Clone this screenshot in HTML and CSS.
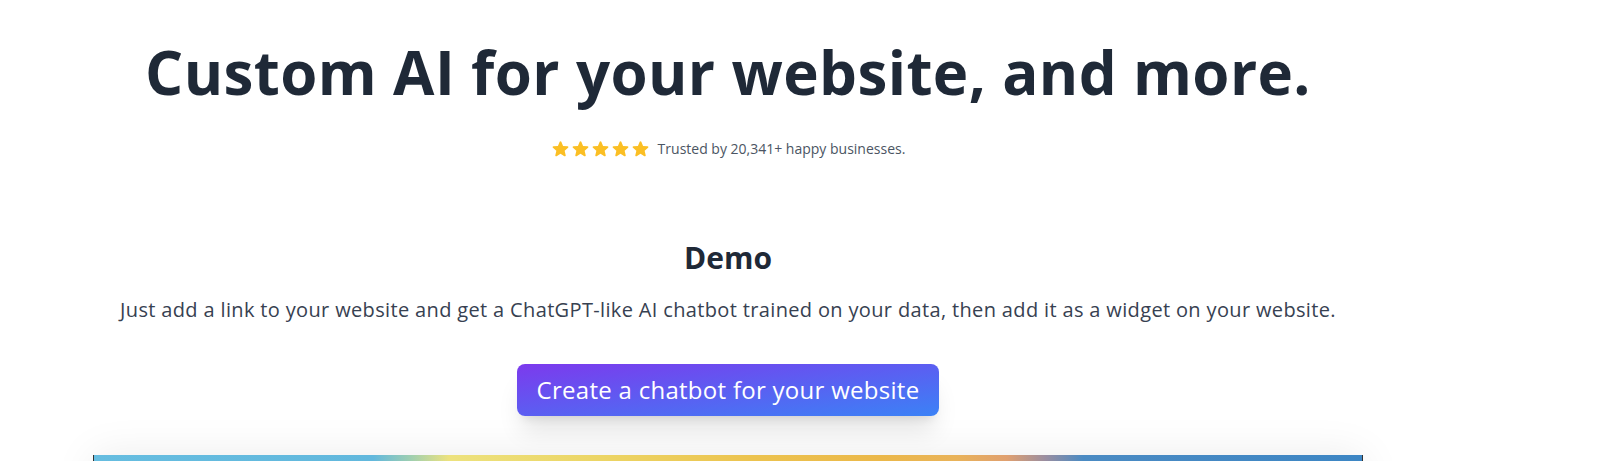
FILE: index.html
```html
<!DOCTYPE html>
<html lang="en">
<head>
    <meta charset="UTF-8">
    <title>Custom AI for your website</title>
    <link rel="stylesheet" href="styles.css">
</head>
<body>
    <main class="page">
        <section class="hero">
            <h1 class="title">Custom AI for your website, and more.</h1>
            <div class="rating">
                <div class="stars">
                    <svg viewBox="0 0 20 20"><path d="M10.87 2.88c-.32-.77-1.42-.77-1.74 0L7.3 7.29l-4.75.38c-.83.07-1.17 1.1-.54 1.65l3.62 3.1-1.1 4.64c-.2.81.69 1.46 1.4 1.02L10 15.59l4.07 2.49c.71.44 1.6-.21 1.4-1.02l-1.1-4.64 3.62-3.1c.63-.55.3-1.58-.54-1.65l-4.75-.38-1.83-4.4z"/></svg>
                    <svg viewBox="0 0 20 20"><path d="M10.87 2.88c-.32-.77-1.42-.77-1.74 0L7.3 7.29l-4.75.38c-.83.07-1.17 1.1-.54 1.65l3.62 3.1-1.1 4.64c-.2.81.69 1.46 1.4 1.02L10 15.59l4.07 2.49c.71.44 1.6-.21 1.4-1.02l-1.1-4.64 3.62-3.1c.63-.55.3-1.58-.54-1.65l-4.75-.38-1.83-4.4z"/></svg>
                    <svg viewBox="0 0 20 20"><path d="M10.87 2.88c-.32-.77-1.42-.77-1.74 0L7.3 7.29l-4.75.38c-.83.07-1.17 1.1-.54 1.65l3.62 3.1-1.1 4.64c-.2.81.69 1.46 1.4 1.02L10 15.59l4.07 2.49c.71.44 1.6-.21 1.4-1.02l-1.1-4.64 3.62-3.1c.63-.55.3-1.58-.54-1.65l-4.75-.38-1.83-4.4z"/></svg>
                    <svg viewBox="0 0 20 20"><path d="M10.87 2.88c-.32-.77-1.42-.77-1.74 0L7.3 7.29l-4.75.38c-.83.07-1.17 1.1-.54 1.65l3.62 3.1-1.1 4.64c-.2.81.69 1.46 1.4 1.02L10 15.59l4.07 2.49c.71.44 1.6-.21 1.4-1.02l-1.1-4.64 3.62-3.1c.63-.55.3-1.58-.54-1.65l-4.75-.38-1.83-4.4z"/></svg>
                    <svg viewBox="0 0 20 20"><path d="M10.87 2.88c-.32-.77-1.42-.77-1.74 0L7.3 7.29l-4.75.38c-.83.07-1.17 1.1-.54 1.65l3.62 3.1-1.1 4.64c-.2.81.69 1.46 1.4 1.02L10 15.59l4.07 2.49c.71.44 1.6-.21 1.4-1.02l-1.1-4.64 3.62-3.1c.63-.55.3-1.58-.54-1.65l-4.75-.38-1.83-4.4z"/></svg>
                </div>
                <span class="rating-text">Trusted by 20,341+ happy businesses.</span>
            </div>
        </section>

        <section class="demo">
            <h2 class="demo-title">Demo</h2>
            <p class="demo-text">Just add a link to your website and get a ChatGPT-like AI chatbot trained on your data, then add it as a widget on your website.</p>
            <a class="cta" href="#">Create a chatbot for your website</a>
            <div class="frame">
                <div class="frame-bar"></div>
            </div>
        </section>
    </main>
</body>
</html>
```

FILE: styles.css
```css
:root {
    --heading: #1f2937;
    --text: #374151;
    --muted: #4b5563;
    --star: #fbbf24;
}
body {
    margin: 0;
    font-family: "Open Sans", "Noto Sans", sans-serif;
    background: #fff;
    color: var(--heading);
    overflow: hidden;
}
.page {
    width: 1280px;
    margin-left: 88px;
}
.hero {
    padding-top: 42px;
    text-align: center;
}
.title {
    margin: 0;
    font-size: 60px;
    line-height: 1;
    font-weight: 700;
    letter-spacing: 0.4px;
}
.rating {
    display: flex;
    justify-content: center;
    align-items: center;
    gap: 8px;
    margin-top: 37px;
}
.stars {
    display: flex;
    gap: 1px;
}
.stars svg {
    width: 19px;
    height: 19px;
    fill: var(--star);
}
.rating-text {
    font-size: 14px;
    color: var(--muted);
}
.demo {
    display: flex;
    flex-direction: column;
    align-items: center;
    text-align: center;
    padding-top: 82px;
}
.demo-title {
    margin: 0;
    font-size: 30px;
    line-height: 36px;
    font-weight: 700;
}
.demo-text {
    margin: 20px 0 0;
    font-size: 20px;
    line-height: 28px;
    color: var(--text);
    letter-spacing: 0.35px;
}
.cta {
    margin-top: 40px;
    padding: 10px 20px;
    font-size: 24px;
    line-height: 32px;
    letter-spacing: 0.28px;
    color: #fff;
    text-decoration: none;
    border-radius: 8px;
    background: linear-gradient(to bottom right, #7c3aed, #3b82f6);
    box-shadow: 0 20px 25px -5px rgba(0, 0, 0, 0.1), 0 8px 10px -6px rgba(0, 0, 0, 0.1);
}
.frame {
    width: 1268px;
    height: 500px;
    margin-top: 39px;
    background: #fff;
    border-left: 1px solid #333;
    border-right: 1px solid #333;
    box-shadow: 0 0 40px rgba(0, 0, 0, 0.08);
}
.frame-bar {
    height: 12px;
    background: linear-gradient(to right, #66bde0 0%, #62b8dd 22%, #9fcfb0 25%, #ede27e 28%, #ecd565 40%, #ecc34f 52%, #ebb84a 62%, #e9b35a 68%, #e0a070 72%, #9b8ea0 75%, #4b8bc3 78%, #3d86c4 100%);
}
```
